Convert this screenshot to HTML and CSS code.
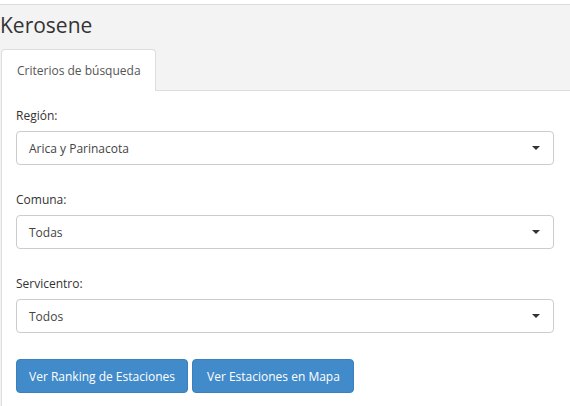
FILE: index.html
```html
<!DOCTYPE html>
<html lang="es">
<head>
<meta charset="utf-8">
<title>Kerosene</title>
<link rel="stylesheet" href="styles.css">
</head>
<body>
<div class="topbar"></div>
<h1 class="title">Kerosene</h1>
<div class="tabs">
  <div class="tab">Criterios de búsqueda</div>
</div>
<div class="panel">
  <div class="group">
    <div class="label">Región:</div>
    <div class="select"><span>Arica y Parinacota</span><span class="caret"></span></div>
  </div>
  <div class="group">
    <div class="label">Comuna:</div>
    <div class="select"><span>Todas</span><span class="caret"></span></div>
  </div>
  <div class="group">
    <div class="label">Servicentro:</div>
    <div class="select"><span>Todos</span><span class="caret"></span></div>
  </div>
  <div class="buttons">
    <button class="btn">Ver Ranking de Estaciones</button>
    <button class="btn">Ver Estaciones en Mapa</button>
  </div>
</div>
</body>
</html>
```
FILE: styles.css
```css
html, body {
  margin: 0;
  padding: 0;
}
html {
  overflow: hidden;
}
body {
  background: #f3f3f3;
  font-family: "Open Sans", "Liberation Sans", sans-serif;
  font-size: 12px;
  color: #333;
  height: 406px;
  overflow: hidden;
}
.topbar {
  height: 4px;
  background: #fff;
  border-bottom: 1px solid #dcdcdc;
}
.title {
  margin: 7px 0 0 0;
  font-weight: normal;
  font-size: 21px;
  line-height: 26px;
  height: 36px;
  color: #333;
}
.tabs {
  display: flex;
  padding-left: 1px;
}
.tab {
  background: #fff;
  border: 1px solid #dddddd;
  border-bottom: none;
  border-radius: 4px 4px 0 0;
  width: 155px;
  height: 42px;
  box-sizing: border-box;
  padding-left: 15px;
  display: flex;
  align-items: center;
  color: #555;
  position: relative;
  top: 1px;
}
.panel {
  margin-left: 1px;
  background: #fff;
  border-top: 1px solid #dddddd;
  border-left: 1px solid #dddddd;
  padding: 16px 16px 0 14px;
  height: 316px;
  box-sizing: border-box;
}
.group {
  margin-bottom: 26px;
}
.label {
  line-height: 17px;
  margin-bottom: 7px;
  color: #333;
}
.select {
  height: 34px;
  box-sizing: border-box;
  border: 1px solid #cccccc;
  border-radius: 4px;
  padding: 0 13px 0 12px;
  display: flex;
  align-items: center;
  justify-content: space-between;
  color: #444;
}
.caret {
  width: 0;
  height: 0;
  border-left: 4px solid transparent;
  border-right: 4px solid transparent;
  border-top: 4px solid #333;
}
.buttons {
  display: flex;
  gap: 4px;
}
.btn {
  font-family: inherit;
  font-size: 12px;
  height: 34px;
  padding: 0 12px;
  background: #428bca;
  border: 1px solid #3b80bd;
  border-radius: 4px;
  color: #fff;
}
.btn + .btn {
  padding: 0 13px 0 14px;
}
```
